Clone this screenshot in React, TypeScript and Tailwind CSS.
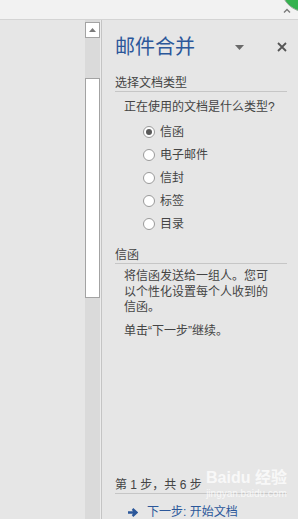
import React from "react";

const TYPES = ["信函", "电子邮件", "信封", "标签", "目录"];

function Radio({ checked }: { checked?: boolean }) {
  return (
    <span className="w-[12px] h-[12px] rounded-full border border-[#9a9a9a] bg-white flex items-center justify-center">
      {checked && <span className="w-[6px] h-[6px] rounded-full bg-[#5a5a5a]" />}
    </span>
  );
}

export default function App() {
  return (
    <div className="w-[298px] h-[519px] flex flex-col bg-[#e6e6e6] overflow-hidden relative font-['Liberation_Sans','Noto_Sans_CJK_SC',sans-serif] text-[#444]">
      {/* top strip */}
      <div className="h-[20px] shrink-0 bg-[#f2f2f2] border-b border-[#d4d4d4] relative">
        <svg className="absolute left-[283px] top-[8px]" width="8" height="5" viewBox="0 0 8 5">
          <path d="M1 4.5 L4 1.5 L7 4.5" stroke="#7a7a7a" strokeWidth="1.4" fill="none" />
        </svg>
        <div className="absolute left-[281px] top-[-36px] w-[48px] h-[48px] rounded-full bg-[#35b24f] border border-[#9aa89c]" />
      </div>

      <div className="flex flex-1 min-h-0">
        {/* document area */}
        <div className="w-[85px] shrink-0" />

        {/* scrollbar */}
        <div className="w-[15px] shrink-0 bg-[#dadada] flex flex-col pt-[2px]">
          <div className="h-[16px] bg-white border border-[#a3a3a3] flex items-center justify-center">
            <svg width="7" height="4" viewBox="0 0 7 4">
              <path d="M0 4 L3.5 0 L7 4 Z" fill="#7a7a7a" />
            </svg>
          </div>
          <div className="h-[40px]" />
          <div className="h-[220px] bg-white border border-[#a3a3a3]" />
        </div>
        <div className="w-[1px] shrink-0 bg-[#ececec]" />

        {/* mail merge pane */}
        <div className="flex-1 flex flex-col border-l border-[#c4c4c4] pl-[13px] pr-[11px]">
          <div className="mt-[13px] h-[28px] flex items-center">
            <span className="text-[20px] leading-[28px] text-[#2b579a]">邮件合并</span>
            <svg className="ml-auto mr-[33px]" width="9" height="5" viewBox="0 0 9 5">
              <path d="M0 0 L9 0 L4.5 5 Z" fill="#6a6a6a" />
            </svg>
            <svg width="10" height="10" viewBox="0 0 10 10">
              <path d="M1 1 L9 9 M9 1 L1 9" stroke="#555" strokeWidth="1.8" />
            </svg>
          </div>

          <div className="mt-[14px] text-[12px] leading-[16px] border-b border-[#c6c6c6]">选择文档类型</div>
          <div className="mt-[7px] pl-[9px] text-[12px] leading-[16px]">正在使用的文档是什么类型?</div>

          <div className="mt-[5px] flex flex-col pl-[28px]">
            {TYPES.map((t, i) => (
              <div key={t} className="h-[23px] flex items-center gap-[5px] text-[12px]">
                <Radio checked={i === 0} />
                <span>{t}</span>
              </div>
            ))}
          </div>

          <div className="mt-[12px] text-[12px] leading-[16px] border-b border-[#c6c6c6]">信函</div>
          <p className="mt-[5px] pl-[9px] w-[160px] text-[12px] leading-[15.5px]">
            将信函发送给一组人。您可以个性化设置每个人收到的信函。
          </p>
          <p className="mt-[7px] pl-[9px] text-[12px] leading-[16px]">单击“下一步”继续。</p>

          <div className="mt-auto text-[12px] leading-[16px] border-b border-[#c6c6c6]">第 1 步，共 6 步</div>
          <div className="mt-[11px] h-[14px] flex items-center pl-[13px] gap-[9px] text-[12px] leading-[14px] text-[#2b579a]">
            <svg width="10" height="9" viewBox="0 0 10 9">
              <path d="M0 4.5 H7.5 M4.5 1 L8.5 4.5 L4.5 8" stroke="#2b579a" strokeWidth="2.4" fill="none" />
            </svg>
            <span>下一步: 开始文档</span>
          </div>
        </div>
      </div>

      {/* watermark */}
      <div className="absolute left-[206px] top-[468px] flex flex-col items-center text-white opacity-75 pointer-events-none">
        <span className="text-[16px] leading-[20px] font-bold">Baidu 经验</span>
        <span className="text-[10px] leading-[12px]">jingyan.baidu.com</span>
      </div>
    </div>
  );
}
